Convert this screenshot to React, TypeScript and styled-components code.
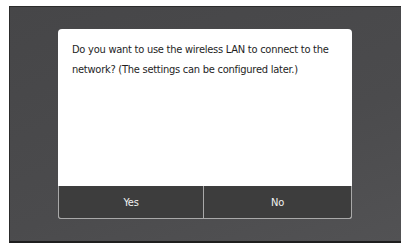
import React from "react";
import styled, { createGlobalStyle } from "styled-components";

const Global = createGlobalStyle`
  html, body { margin: 0; padding: 0; background: #ffffff; }
  body { width: 401px; height: 243px; overflow: hidden; }
`;

const Screen = styled.div`
  margin: 6px 0 0 9px;
  width: 392px;
  height: 237px;
  box-sizing: border-box;
  border-top: 1px solid #2c2c2c;
  border-left: 1px solid #2c2c2c;
  border-bottom: 2px solid #1e1e1e;
  background: linear-gradient(160deg, #464648 0%, #4b4b4d 60%, #525254 100%);
  padding: 22px 0 0 48px;
`;

const Dialog = styled.div`
  width: 294px;
  height: 190px;
  display: flex;
  flex-direction: column;
  background: #ffffff;
  border-radius: 4px;
`;

const Message = styled.p`
  flex: 1;
  margin: 0;
  padding: 11px 10px 0 14px;
  font-family: "DejaVu Sans Condensed", "Liberation Sans Narrow", sans-serif;
  font-size: 11px;
  letter-spacing: -0.25px;
  line-height: 20px;
  color: #1e1e1e;
`;

const Buttons = styled.div`
  display: flex;
  height: 33px;
  box-sizing: border-box;
  background: #3d3d3d;
  border: 1px solid #a9a9a9;
  border-top: none;
  border-radius: 0 0 3px 3px;
`;

const Button = styled.button<{ $divider?: boolean }>`
  flex: ${(p) => (p.$divider ? "0 0 145px" : "1")};
  margin: 0;
  padding: 1px 0 0;
  background: transparent;
  border: none;
  border-right: ${(p) => (p.$divider ? "1px solid #a9a9a9" : "none")};
  color: #f2f2f2;
  font-family: "DejaVu Sans Condensed", "Liberation Sans Narrow", sans-serif;
  font-size: 11px;
  letter-spacing: -0.2px;
  display: flex;
  align-items: center;
  justify-content: center;
`;

export default function App() {
  return (
    <>
      <Global />
      <Screen>
        <Dialog>
          <Message>
            Do you want to use the wireless LAN to connect to the network? (The settings can be configured later.)
          </Message>
          <Buttons>
            <Button $divider>Yes</Button>
            <Button>No</Button>
          </Buttons>
        </Dialog>
      </Screen>
    </>
  );
}
